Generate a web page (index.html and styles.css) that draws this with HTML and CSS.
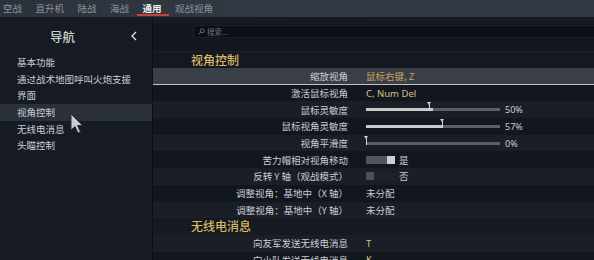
FILE: index.html
```html
<!DOCTYPE html>
<html lang="zh">
<head>
<meta charset="utf-8">
<link rel="stylesheet" href="styles.css">
</head>
<body>
<div class="app">
  <nav class="tabs">
    <span class="tab">空战</span>
    <span class="tab">直升机</span>
    <span class="tab">陆战</span>
    <span class="tab">海战</span>
    <span class="tab active">通用</span>
    <span class="tab">观战视角</span>
  </nav>
  <div class="main">
    <aside class="side">
      <div class="side-head">
        <span class="side-title">导航</span>
        <svg class="chev" width="6" height="10" viewBox="0 0 6 10"><path d="M5 1 L1 5 L5 9" fill="none" stroke="#e6e6e6" stroke-width="1.3"/></svg>
      </div>
      <ul class="nav">
        <li>基本功能</li>
        <li>通过战术地图呼叫火炮支援</li>
        <li>界面</li>
        <li class="current">视角控制</li>
        <li>无线电消息</li>
        <li>头瞄控制</li>
      </ul>
      <svg class="cursor" width="14" height="21" viewBox="0 0 14 21"><path d="M1 1 L1 17 L5 13.5 L8 20 L10.5 19 L7.6 12.6 L12.5 12.4 Z" fill="#c9ccd0" stroke="#2a2d33" stroke-width="1"/></svg>
    </aside>
    <section class="content">
      <div class="search-area">
        <div class="search">
          <svg width="7" height="7" viewBox="0 0 7 7"><circle cx="4.3" cy="2.7" r="2" fill="none" stroke="#6f757d" stroke-width="0.9"/><path d="M2.8 4.2 L0.7 6.3" stroke="#6f757d" stroke-width="1"/></svg>
          <span>搜索...</span>
        </div>
      </div>
      <div class="section">视角控制</div>
      <div class="row selected"><span class="label">缩放视角</span><span class="val gold">鼠标右键, Z</span></div>
      <div class="row dark"><span class="label">激活鼠标视角</span><span class="val key">C, Num Del</span></div>
      <div class="row light"><span class="label">鼠标灵敏度</span><span class="val"><span class="slider"><span class="fill" style="width:50%"></span><span class="thumb" style="left:47%"></span></span><span class="pct">50%</span></span></div>
      <div class="row dark"><span class="label">鼠标视角灵敏度</span><span class="val"><span class="slider"><span class="fill" style="width:57%"></span><span class="thumb" style="left:57%"></span></span><span class="pct">57%</span></span></div>
      <div class="row light"><span class="label">视角平滑度</span><span class="val"><span class="slider"><span class="fill" style="width:0%"></span><span class="thumb" style="left:0%"></span></span><span class="pct">0%</span></span></div>
      <div class="row dark"><span class="label">苦力帽相对视角移动</span><span class="val"><span class="toggle on"><span class="knob"></span></span><span class="tv">是</span></span></div>
      <div class="row light"><span class="label">反转 Y 轴（观战模式）</span><span class="val"><span class="toggle off"><span class="knob"></span></span><span class="tv">否</span></span></div>
      <div class="row dark"><span class="label">调整视角：基地中（X 轴）</span><span class="val plain">未分配</span></div>
      <div class="row light"><span class="label">调整视角：基地中（Y 轴）</span><span class="val plain">未分配</span></div>
      <div class="section dark">无线电消息</div>
      <div class="row light"><span class="label">向友军发送无线电消息</span><span class="val key">T</span></div>
      <div class="row dark"><span class="label">向小队发送无线电消息</span><span class="val key">K</span></div>
    </section>
  </div>
</div>
</body>
</html>
```

FILE: styles.css
```css
* { box-sizing: border-box; margin: 0; padding: 0; }
html, body { width: 594px; height: 260px; overflow: hidden; background: #12161d; }
body { font-family: "Noto Sans", "Noto Sans CJK SC", sans-serif; }

.app { width: 594px; height: 260px; display: flex; flex-direction: column; }

.tabs {
  height: 17px;
  flex: none;
  display: flex;
  align-items: center;
  gap: 13.5px;
  padding-left: 3px;
  background: linear-gradient(90deg, #2c323b, #333a44 50%, #323942);
}
.tab { position: relative; font-size: 9.5px; line-height: 17px; color: #8c929b; font-family: "Noto Sans CJK SC", sans-serif; }
.tab.active { color: #f2f2f2; font-weight: 700; }
.tab.active::after {
  content: ""; position: absolute; left: -6px; right: -7px; bottom: 1px; height: 2px; background: #c2443a;
}

.main { flex: 1; display: flex; min-height: 0; }

.side {
  position: relative;
  width: 153px; flex: none;
  background: #161a22;
  border-right: 1px solid #0b0e13;
}
.side-head {
  height: 37px;
  display: flex; align-items: center;
  padding-left: 50px;
  padding-top: 1px;
}
.side-title { font-family: "Noto Sans CJK SC", sans-serif; font-size: 12.5px; color: #ececec; }
.chev { margin-left: 56px; }
.nav { list-style: none; }
.nav li {
  height: 16.7px; line-height: 16.7px;
  padding-left: 17px;
  font-family: "Noto Sans CJK SC", sans-serif;
  font-size: 9.5px; color: #c9cdd3;
}
.nav li.current { background: #2a313b; }
.cursor { position: absolute; left: 70px; top: 96px; }

.content { flex: 1; background: #141820; overflow: hidden; }
.search-area {
  height: 35px;
  padding: 8px 0 0 40px;
  background: linear-gradient(#161a22 0, #161a22 7px, #12161d 7px);
  border-bottom: 1px solid #1d222a;
}
.search {
  height: 13px;
  display: flex; align-items: center; gap: 2px;
  padding-left: 4px;
  background: #0b0e13;
  border: 1px solid #1c2129;
  border-right: none;
}
.search span { font-family: "Noto Sans CJK SC", sans-serif; font-size: 7.5px; color: #6f757d; }

.section {
  height: 16px; line-height: 16px;
  padding-left: 38px;
  font-family: "Noto Sans CJK SC", sans-serif;
  font-size: 12px; color: #d8b867; font-weight: 500;
}
.section.dark { height: 16.7px; line-height: 16.7px; background: #151920; }

.row {
  height: 16.7px;
  display: flex; align-items: center;
  font-family: "Noto Sans CJK SC", sans-serif;
  font-size: 9.5px;
}
.row.light { background: #1a1f27; }
.row.dark { background: #12161d; }
.row.selected { background: #3a3f47; border-bottom: 1px solid #bfc2c6; }
.label { width: 195px; text-align: right; color: #c9cdd3; flex: none; }
.val { margin-left: 18px; display: flex; align-items: center; color: #c8ccd0; }
.val.gold { color: #c6a35c; }
.val.key { color: #d3c38e; font-family: "Noto Sans", sans-serif; font-size: 9.5px; }
.val.plain { color: #c8ccd0; }

.slider { position: relative; width: 134px; height: 3px; background: #5a5e65; }
.fill { position: absolute; left: 0; top: 0; bottom: 0; background: #c6c8cb; }
.thumb { position: absolute; top: -6px; width: 5px; height: 9px; margin-left: -2px; }
.thumb::before {
  content: ""; position: absolute; left: 0; top: 0;
  border-left: 2.5px solid transparent; border-right: 2.5px solid transparent; border-top: 3px solid #d4d6d9;
}
.thumb::after { content: ""; position: absolute; left: 2px; top: 2px; width: 1px; height: 7px; background: #d4d6d9; }
.pct { margin-left: 5px; font-family: "Noto Sans", sans-serif; font-size: 9px; color: #c8ccd0; }

.toggle { width: 29px; height: 8px; display: flex; }
.toggle.on { background: #50565d; justify-content: flex-end; }
.toggle.off { background: #1c2028; justify-content: flex-start; }
.knob { width: 8px; height: 8px; }
.toggle.on .knob { background: #cdd0d3; }
.toggle.off .knob { background: #4b5058; }
.tv { margin-left: 4px; color: #c8ccd0; font-size: 9.5px; }
```
